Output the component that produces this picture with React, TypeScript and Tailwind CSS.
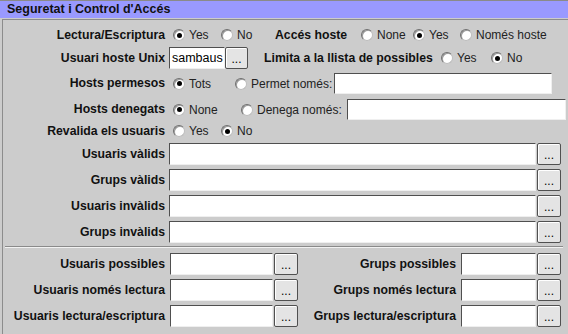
import React from 'react';

type RadioProps = { label: string; checked?: boolean; className?: string };

const Radio: React.FC<RadioProps> = ({ label, checked, className = '' }) => (
  <div className={`flex items-center shrink-0 ${className}`}>
    <span className="w-[12px] h-[12px] shrink-0 rounded-full border border-[#6e6e6e] border-b-[#bdbdbd] border-r-[#bdbdbd] bg-white flex items-center justify-center shadow-[inset_1px_1px_0_#9a9a9a]">
      {checked && <span className="w-[5px] h-[5px] rounded-full bg-black" />}
    </span>
    <span className="ml-[4px] text-[12px] text-[#222] whitespace-nowrap">{label}</span>
  </div>
);

const Label: React.FC<{ text: string; className?: string }> = ({ text, className = 'w-[162px] text-right' }) => (
  <div className={`shrink-0 font-bold text-[12.25px] text-[#111] whitespace-nowrap ${className}`}>{text}</div>
);

const Field: React.FC<{ className: string; value?: string }> = ({ className, value }) => (
  <div
    className={`shrink-0 bg-white border border-[#4f4f4f] border-b-[#efefef] border-r-[#efefef] text-[12.5px] text-black pl-[2px] flex items-center ${className}`}
  >
    {value}
  </div>
);

const Dots: React.FC<{ className?: string }> = ({ className = 'w-[24px] h-[22px]' }) => (
  <div
    className={`shrink-0 rounded-[2px] border border-[#505050] bg-[#e4e4e4] shadow-[inset_1px_1px_0_#ffffff] flex items-end justify-center pb-[3px] text-[12px] leading-none text-black ${className}`}
  >
    ...
  </div>
);

const App: React.FC = () => {
  const listRows = ['Usuaris vàlids', 'Grups vàlids', 'Usuaris invàlids', 'Grups invàlids'];
  const bottomRows = [
    ['Usuaris possibles', 'Grups possibles'],
    ['Usuaris només lectura', 'Grups només lectura'],
    ['Usuaris lectura/escriptura', 'Grups lectura/escriptura'],
  ];

  return (
    <div className="w-[568px] h-[334px] overflow-hidden bg-[#cccccc] font-['Liberation_Sans',Arial,sans-serif]">
      {/* Title bar */}
      <div className="h-[18px] bg-[#9999ff] border-t border-[#8a8a8a] pl-[7px] flex items-center font-bold text-[12.5px] text-[#111]">
        Seguretat i Control d'Accés
      </div>

      {/* Panel */}
      <div className="mt-[1px] ml-[2px] h-[320px] border-l border-t border-[#8c8c8c]">
        {/* Row 1 */}
        <div className="mt-[5px] h-[20px] flex items-center">
          <Label text="Lectura/Escriptura" />
          <Radio label="Yes" checked className="ml-[8px] w-[48px]" />
          <Radio label="No" className="w-[54px]" />
          <Label text="Accés hoste" className="w-[86px]" />
          <Radio label="None" className="w-[52px]" />
          <Radio label="Yes" checked className="w-[47px]" />
          <Radio label="Només hoste" />
        </div>

        {/* Row 2 */}
        <div className="mt-[2px] h-[22px] flex items-center">
          <Label text="Usuari hoste Unix" />
          <Field value="sambaus" className="ml-[4px] w-[56px] h-[22px]" />
          <Dots className="w-[23px] h-[22px]" />
          <Label text="Limita a la llista de possibles" className="ml-[16px] w-[177px]" />
          <Radio label="Yes" className="w-[50px]" />
          <Radio label="No" checked />
        </div>

        {/* Row 3 */}
        <div className="mt-[4px] h-[21px] flex items-center">
          <Label text="Hosts permesos" />
          <Radio label="Tots" checked className="ml-[8px] w-[62px]" />
          <Radio label="Permet només:" className="w-[99px]" />
          <Field className="w-[218px] h-[21px]" />
        </div>

        {/* Row 4 */}
        <div className="mt-[5px] h-[21px] flex items-center">
          <Label text="Hosts denegats" />
          <Radio label="None" checked className="ml-[8px] w-[68px]" />
          <Radio label="Denega només:" className="w-[106px]" />
          <Field className="w-[219px] h-[21px]" />
        </div>

        {/* Row 5 */}
        <div className="mt-[1px] h-[20px] flex items-center">
          <Label text="Revalida els usuaris" />
          <Radio label="Yes" className="ml-[8px] w-[48px]" />
          <Radio label="No" checked />
        </div>

        {/* List rows */}
        <div className="mt-[2px] flex flex-col gap-[4px]">
          {listRows.map((r) => (
            <div key={r} className="h-[22px] flex items-center">
              <Label text={r} />
              <Field className="ml-[4px] w-[367px] h-[22px]" />
              <Dots className="ml-[1px] w-[24px] h-[22px]" />
            </div>
          ))}
        </div>

        {/* Separator */}
        <div className="mt-[3px] mx-[2px] w-[558px] h-[2px] border-t border-[#8a8a8a] border-b border-b-[#f2f2f2]" />

        {/* Bottom rows */}
        <div className="mt-[5px] flex flex-col gap-[4px]">
          {bottomRows.map(([l, r]) => (
            <div key={l} className="h-[22px] flex items-center">
              <Label text={l} />
              <Field className="ml-[5px] w-[103px] h-[22px]" />
              <Dots className="ml-[1px] w-[24px] h-[22px]" />
              <Label text={r} className="w-[158px] text-right" />
              <Field className="ml-[5px] w-[75px] h-[22px]" />
              <Dots className="ml-[1px] w-[24px] h-[22px]" />
            </div>
          ))}
        </div>
      </div>
    </div>
  );
};

export default App;
